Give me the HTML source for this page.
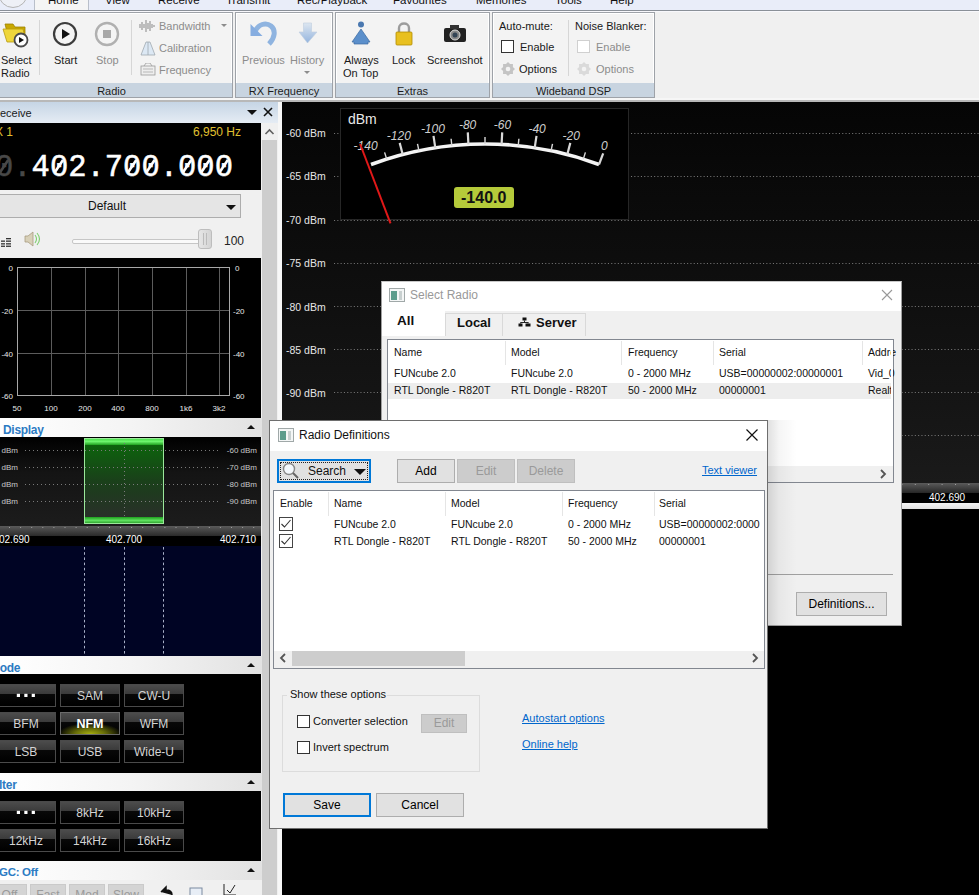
<!DOCTYPE html>
<html><head><meta charset="utf-8">
<style>
*{box-sizing:border-box}
html,body{margin:0;padding:0;overflow:hidden}
body{width:979px;height:895px;overflow:hidden;position:relative;background:#000;font-family:"Liberation Sans",sans-serif;font-size:12px;color:#000}
.a{position:absolute}
.t{position:absolute;white-space:nowrap;line-height:1}
/* ribbon */
#tabbar{left:0;top:0;width:979px;height:12px;background:#e9edf9;border-bottom:1px solid #a9b0bd}
#ribbon{left:0;top:12px;width:979px;height:88px;background:#f0f0f0}
.grp{position:absolute;top:1px;height:86px;border:1px solid #9ea2a8;background:#f3f3f3;box-shadow:inset 1px 1px 0 #fff,inset -1px 0 0 #fff}
.glab{position:absolute;left:0;right:0;bottom:0;height:14px;background:#c8d4e0;text-align:center;font-size:11px;line-height:17px;color:#1c1c1c;overflow:visible}
.rt{position:absolute;white-space:nowrap;line-height:1;font-size:11px;color:#1a1a1a;margin-top:1px}
.dis{color:#8c8c8c}
/* panel headers */
.ph{position:absolute;left:0;width:262px;height:18px;background:linear-gradient(90deg,#ffffff 0%,#f4f4f4 50%,#e2e2e2 100%);}
.ph .t{left:3px;top:6px;font-size:12px;font-weight:bold;color:#2c7bc3;letter-spacing:-0.3px}
.uparr{position:absolute;left:247px;top:7px;width:0;height:0;border-left:4px solid transparent;border-right:4px solid transparent;border-bottom:4px solid #111}
/* mode buttons */
.mb{position:absolute;width:60px;height:23px;border:1px solid #4a4a4a;background:linear-gradient(#4c4c4c 0%,#3a3a3a 44%,#080808 45%,#000 100%);color:#d4d4d4;font-size:12px;text-align:center;line-height:23px}
/* dialog */
.dlg{position:absolute;background:#f0f0f0;border:1px solid #8a8a8a}
.btn{position:absolute;background:#e1e1e1;border:1px solid #adadad;text-align:center;font-size:12px;color:#000}
.btn.dis{background:#cccccc;border-color:#bfbfbf;color:#9a9a9a}
.link{color:#0066cc;text-decoration:underline}
.cb{position:absolute;width:13px;height:13px;border:1px solid #333;background:#fff}
</style></head><body>

<!-- ============ RIBBON ============ -->
<div id="tabbar" class="a"></div>
<div class="a" style="left:0;top:0;width:35px;height:11px;border-right:1px solid #b9bfca;border-bottom:1px solid #b9bfca;background:#e9edf9"></div>
<div class="a" style="left:-2px;top:-22px;width:30px;height:30px;border-radius:50%;border:1px solid #b4b4b4;background:#eef0f6"></div>
<div class="a" style="left:35px;top:0;width:54px;height:12px;background:#f5f5f5"></div>
<div class="a" style="left:88px;top:0;width:891px;height:11px;border-left:1px solid #b9bfca;border-bottom:1px solid #b9bfca;background:#e9edf9"></div>
<div class="t" style="left:48px;top:-5px;font-size:11.5px;color:#111">Home</div>
<div class="t" style="left:105px;top:-5px;font-size:11.5px;color:#111">View</div>
<div class="t" style="left:158px;top:-5px;font-size:11.5px;color:#111">Receive</div>
<div class="t" style="left:226px;top:-5px;font-size:11.5px;color:#111">Transmit</div>
<div class="t" style="left:297px;top:-5px;font-size:11.5px;color:#111">Rec/Playback</div>
<div class="t" style="left:393px;top:-5px;font-size:11.5px;color:#111">Favourites</div>
<div class="t" style="left:476px;top:-5px;font-size:11.5px;color:#111">Memories</div>
<div class="t" style="left:555px;top:-5px;font-size:11.5px;color:#111">Tools</div>
<div class="t" style="left:610px;top:-5px;font-size:11.5px;color:#111">Help</div>
<div class="a" style="left:0;top:10px;width:979px;height:1px;background:#8a9098"></div><div class="a" style="left:0;top:11px;width:979px;height:1px;background:#f8f8fc"></div>
<div id="ribbon" class="a"></div>
<!-- groups -->
<div class="grp" style="left:-10px;top:12px;width:243px;height:86px">
  <div class="glab">Radio</div>
</div>
<div class="grp" style="left:235px;top:12px;width:98px;height:86px">
  <div class="glab">RX Frequency</div>
</div>
<div class="grp" style="left:335px;top:12px;width:155px;height:86px">
  <div class="glab">Extras</div>
</div>
<div class="grp" style="left:492px;top:12px;width:163px;height:86px">
  <div class="glab">Wideband DSP</div>
</div>
<!-- Radio group content -->
<div class="a" style="left:39px;top:20px;width:1px;height:55px;background:#d6d6d6"></div>
<div class="a" style="left:131px;top:20px;width:1px;height:55px;background:#d6d6d6"></div>
<svg class="a" style="left:1px;top:18px" width="30" height="30" viewBox="0 0 30 30">
 <path d="M4 6 L12 6 L14 9 L24 9 L24 20 L8 22 Z" fill="#c9a800" stroke="#9d8200" stroke-width="0.8"/>
 <path d="M2 11 L22 11 L25 24 L6 24 Z" fill="#efd63a" stroke="#b69a10" stroke-width="0.8"/>
 <circle cx="20" cy="22" r="6.5" fill="#fff" stroke="#4a4a4a" stroke-width="1.8"/>
 <path d="M18 19 L18 25 L23 22 Z" fill="#111"/>
</svg>
<div class="rt" style="left:1px;top:54px">Select</div>
<div class="rt" style="left:1px;top:67px">Radio</div>
<svg class="a" style="left:52px;top:21px" width="26" height="26" viewBox="0 0 26 26">
 <circle cx="13" cy="13" r="11" fill="#f4f4f4" stroke="#3c3c3c" stroke-width="2.2"/>
 <path d="M10 8 L10 18 L18 13 Z" fill="#111"/>
</svg>
<div class="rt" style="left:54px;top:54px">Start</div>
<svg class="a" style="left:94px;top:21px" width="26" height="26" viewBox="0 0 26 26">
 <circle cx="13" cy="13" r="11" fill="#f4f4f4" stroke="#b0b0b0" stroke-width="2.4"/>
 <rect x="9" y="9" width="8" height="8" fill="#a8a8a8"/>
</svg>
<div class="rt dis" style="left:96px;top:54px">Stop</div>
<svg class="a" style="left:139px;top:19px" width="17" height="14" viewBox="0 0 17 14">
 <g stroke="#9a9a9a" stroke-width="1.2">
 <path d="M1 5v4M3 3v8M5 5v4M7 1v12M9 4v6M11 2v10M13 5v4M15 6v2"/>
 </g>
</svg>
<div class="rt dis" style="left:159px;top:20px">Bandwidth</div>
<div class="a" style="left:221px;top:24px;width:0;height:0;border-left:3px solid transparent;border-right:3px solid transparent;border-top:3px solid #8c8c8c"></div>
<svg class="a" style="left:140px;top:41px" width="16" height="15" viewBox="0 0 16 15">
 <path d="M6 1 L10 1 L15 14 L1 14 Z" fill="#dce8f4" stroke="#a0a8b0" stroke-width="0.8"/>
 <path d="M8 1 L8 14" stroke="#a0a8b0" stroke-width="0.8"/>
</svg>
<div class="rt dis" style="left:159px;top:42px">Calibration</div>
<svg class="a" style="left:140px;top:63px" width="16" height="13" viewBox="0 0 16 13">
 <rect x="1" y="3" width="14" height="9" fill="#eee" stroke="#9a9a9a" stroke-width="0.8"/>
 <path d="M3 6h10M3 9h10" stroke="#aaa" stroke-width="0.8"/>
 <path d="M4 3 L6 0 L10 0 L12 3" fill="none" stroke="#9a9a9a" stroke-width="0.8"/>
</svg>
<div class="rt dis" style="left:159px;top:64px">Frequency</div>
<!-- RX Frequency -->
<svg class="a" style="left:248px;top:20px" width="30" height="28" viewBox="0 0 30 28">
 <path d="M7 12 C10 4, 18 2, 23 6 C28 10, 27 18, 21 24" fill="none" stroke="#8fb4e0" stroke-width="5"/>
 <path d="M2.5 4 L2.5 16 L14.5 16 Z" fill="#86ade0"/>
</svg>
<div class="rt dis" style="left:242px;top:54px">Previous</div>
<svg class="a" style="left:298px;top:22px" width="20" height="22" viewBox="0 0 20 22">
 <defs><linearGradient id="hg" x1="0" y1="0" x2="0" y2="1"><stop offset="0" stop-color="#dde6f0"/><stop offset="1" stop-color="#94b4de"/></linearGradient></defs>
 <path d="M5.5 1 L13.5 1 L13.5 10 L19 10 L9.5 21 L1 10 L5.5 10 Z" fill="url(#hg)" stroke="#c0cedf" stroke-width="0.6"/>
</svg>
<div class="rt dis" style="left:290px;top:54px">History</div>
<div class="a" style="left:304px;top:71px;width:0;height:0;border-left:3px solid transparent;border-right:3px solid transparent;border-top:3px solid #8c8c8c"></div>
<!-- Extras -->
<svg class="a" style="left:348px;top:21px" width="26" height="26" viewBox="0 0 26 26">
 <circle cx="13" cy="3.5" r="3" fill="#4a78b0"/>
 <path d="M13 8 L22 21 L20 21 L20 23 L6 23 L6 21 L4 21 Z" fill="#5b8fcb" stroke="#3c6aa0" stroke-width="0.7"/>
</svg>
<div class="rt" style="left:344px;top:54px">Always</div>
<div class="rt" style="left:343px;top:67px">On Top</div>
<svg class="a" style="left:394px;top:21px" width="20" height="26" viewBox="0 0 20 26">
 <path d="M5 11 L5 7 C5 1, 15 1, 15 7 L15 11" fill="none" stroke="#9c9c9c" stroke-width="2.4"/>
 <rect x="2" y="11" width="16" height="13" rx="1" fill="#e8c020" stroke="#b08c00" stroke-width="0.8"/>
</svg>
<div class="rt" style="left:392px;top:54px">Lock</div>
<svg class="a" style="left:443px;top:24px" width="24" height="19" viewBox="0 0 24 19">
 <rect x="1" y="4" width="22" height="14" rx="2" fill="#222"/>
 <rect x="7" y="1" width="9" height="4" fill="#333"/>
 <circle cx="12" cy="11" r="5" fill="#888" stroke="#ddd" stroke-width="1"/>
 <circle cx="12" cy="11" r="2.5" fill="#345"/>
</svg>
<div class="rt" style="left:427px;top:54px">Screenshot</div>
<!-- Wideband DSP -->
<div class="a" style="left:568px;top:20px;width:1px;height:56px;background:#d6d6d6"></div>
<div class="rt" style="left:499px;top:20px">Auto-mute:</div>
<div class="rt" style="left:575px;top:20px">Noise Blanker:</div>
<div class="a" style="left:501px;top:40px;width:13px;height:13px;border:1px solid #333;background:#fff"></div>
<div class="rt" style="left:520px;top:41px">Enable</div>
<div class="a" style="left:577px;top:40px;width:13px;height:13px;border:1px solid #d0d0d0;background:#fff"></div>
<div class="rt dis" style="left:596px;top:41px">Enable</div>
<svg class="a" style="left:500px;top:61px" width="16" height="16" viewBox="0 0 16 16"><polygon points="15.00,8.00 12.90,10.03 12.95,12.95 10.03,12.90 8.00,15.00 5.97,12.90 3.05,12.95 3.10,10.03 1.00,8.00 3.10,5.97 3.05,3.05 5.97,3.10 8.00,1.00 10.03,3.10 12.95,3.05 12.90,5.97" fill="#c4c4c4"/><circle cx="8" cy="8" r="2.3" fill="#f3f3f3"/></svg>
<div class="rt" style="left:519px;top:63px">Options</div>
<svg class="a" style="left:576px;top:61px" width="16" height="16" viewBox="0 0 16 16"><polygon points="15.00,8.00 12.90,10.03 12.95,12.95 10.03,12.90 8.00,15.00 5.97,12.90 3.05,12.95 3.10,10.03 1.00,8.00 3.10,5.97 3.05,3.05 5.97,3.10 8.00,1.00 10.03,3.10 12.95,3.05 12.90,5.97" fill="#dadada"/><circle cx="8" cy="8" r="2.3" fill="#f3f3f3"/></svg>
<div class="rt dis" style="left:596px;top:63px">Options</div>

<!-- ============ LEFT PANEL ============ -->
<div class="a" style="left:0;top:98px;width:979px;height:4px;background:#f6f6f6"></div>
<div class="a" style="left:0;top:100px;width:979px;height:2px;background:#b8b8b8"></div>
<!-- Receive header -->
<div class="a" style="left:0;top:102px;width:278px;height:21px;background:linear-gradient(#c6d5e5,#e5ecf4)"></div>
<div class="t" style="left:-8px;top:108px;font-size:11px;color:#1a1a1a">Receive</div>
<div class="a" style="left:247px;top:110px;width:0;height:0;border-left:5px solid transparent;border-right:5px solid transparent;border-top:5px solid #111"></div>
<svg class="a" style="left:263px;top:107px" width="10" height="10" viewBox="0 0 10 10"><path d="M1 1L9 9M9 1L1 9" stroke="#111" stroke-width="1.6"/></svg>
<!-- scrollbar -->
<div class="a" style="left:261px;top:123px;width:17px;height:772px;background:#f0f0f0"></div>
<div class="a" style="left:262px;top:140px;width:15px;height:755px;background:#cdcdcd"></div>
<svg class="a" style="left:264px;top:128px" width="11" height="8" viewBox="0 0 11 8"><path d="M1.5 6L5.5 2L9.5 6" fill="none" stroke="#606060" stroke-width="1.6"/></svg>
<div class="a" style="left:278px;top:102px;width:4px;height:793px;background:#f7f7f7"></div>
<!-- freq display -->
<div class="a" style="left:0;top:123px;width:261px;height:67px;background:#000"></div>
<div class="t" style="left:-5px;top:126px;font-size:12px;color:#e0c030">X 1</div>
<div class="t" style="left:193px;top:126px;font-size:12px;color:#e0c030">6,950 Hz</div>
<div class="t" style="left:-5px;top:153px;font-family:'Liberation Mono',monospace;font-size:30.5px;color:#fff;-webkit-text-stroke:0.5px #fff"><span style="color:#484848;-webkit-text-stroke:0.5px #484848">0.</span>402.700.000</div>
<svg class="a" style="left:0;top:0" width="261" height="190" viewBox="0 0 261 190"><path d="M8.2 160 L0.2 172" stroke="#484848" stroke-width="2.6"/><path d="M63.0 160 L55.0 172" stroke="#fff" stroke-width="2.6"/><path d="M136.3 160 L128.3 172" stroke="#fff" stroke-width="2.6"/><path d="M154.6 160 L146.6 172" stroke="#fff" stroke-width="2.6"/><path d="M191.2 160 L183.2 172" stroke="#fff" stroke-width="2.6"/><path d="M209.5 160 L201.5 172" stroke="#fff" stroke-width="2.6"/><path d="M227.8 160 L219.8 172" stroke="#fff" stroke-width="2.6"/></svg>
<!-- dropdown & volume -->
<div class="a" style="left:0;top:190px;width:261px;height:68px;background:#f0f0f0"></div>
<div class="a" style="left:-2px;top:194px;width:243px;height:24px;background:#e5e5e5;border:1px solid #adadad"></div>
<div class="t" style="left:88px;top:200px;font-size:12px;color:#111">Default</div>
<div class="a" style="left:226px;top:205px;width:0;height:0;border-left:5px solid transparent;border-right:5px solid transparent;border-top:5px solid #111"></div>
<svg class="a" style="left:0;top:237px" width="12" height="11" viewBox="0 0 12 11"><g fill="#333"><rect x="1" y="3.5" width="4" height="1.3"/><rect x="1" y="6.2" width="4" height="1.3"/><rect x="1" y="8.6" width="4" height="1.3"/><rect x="6" y="1" width="5" height="1.3"/><rect x="6" y="3.5" width="5" height="1.3"/><rect x="6" y="6.2" width="5" height="1.3"/><rect x="6" y="8.6" width="5" height="1.3"/></g></svg>
<svg class="a" style="left:24px;top:231px" width="18" height="16" viewBox="0 0 18 16"><path d="M1 5h3l5-4v14l-5-4H1z" fill="#d8d0b8" stroke="#a89c80" stroke-width="0.8"/><path d="M11 4q3 4 0 8M13 2q5 6 0 12" fill="none" stroke="#7fcf6f" stroke-width="1.1"/></svg>
<div class="a" style="left:72px;top:239px;width:130px;height:5px;background:#fafafa;border:1px solid #c6c6c6;border-radius:2px"></div>
<div class="a" style="left:198px;top:229px;width:14px;height:20px;background:linear-gradient(90deg,#e6e6e6,#d4d4d4);border:1px solid #bdbdbd;border-radius:3px"></div>
<div class="a" style="left:203px;top:233px;width:1px;height:12px;background:#bbb"></div>
<div class="a" style="left:206px;top:233px;width:1px;height:12px;background:#bbb"></div>
<div class="t" style="left:224px;top:235px;font-size:12px;color:#222">100</div>
<!-- audio spectrum -->
<div class="a" style="left:0;top:258px;width:261px;height:160px;background:#000"></div>
<svg class="a" style="left:0;top:258px" width="261" height="160" viewBox="0 0 261 160">
 <g stroke="#5c5c5c" stroke-width="1">
  <path d="M51.5 9v128M85.5 9v128M118.5 9v128M152.5 9v128M186.5 9v128M219.5 9v128"/>
  <path d="M17 52.5h213M17 95.5h213"/>
 </g>
 <rect x="17.5" y="9.5" width="212" height="128" fill="none" stroke="#a8a8a8" stroke-width="1"/>
 <g fill="#e8e8e8" font-family="Liberation Sans" font-size="8">
  <g text-anchor="end"><text x="13" y="13">0</text><text x="13" y="56">-20</text><text x="13" y="99">-40</text><text x="13" y="141">-60</text></g>
  <text x="235" y="13">0</text><text x="233" y="56">-20</text><text x="233" y="99">-40</text><text x="233" y="141">-60</text>
  <g text-anchor="middle"><text x="17" y="152.5">50</text><text x="51" y="152.5">100</text><text x="85" y="152.5">200</text><text x="118" y="152.5">400</text><text x="152" y="152.5">800</text><text x="186" y="152.5">1k6</text><text x="219" y="152.5">3k2</text></g>
 </g>
</svg>
<!-- Display header -->
<div class="ph" style="top:418px;height:19px"><div class="t">Display</div><div class="uparr"></div></div>
<!-- display spectrum -->
<div class="a" style="left:0;top:437px;width:261px;height:89px;background:linear-gradient(#000 0%,#141414 40%,#1c1c1c 100%)"></div>
<svg class="a" style="left:0;top:437px" width="261" height="89" viewBox="0 0 261 89">
 <defs>
  <linearGradient id="gfill" x1="0" y1="0" x2="0" y2="1"><stop offset="0" stop-color="#0a6a0a"/><stop offset="0.5" stop-color="#1a401a"/><stop offset="1" stop-color="#2c2c2c"/></linearGradient>
  <linearGradient id="gband" x1="0" y1="0" x2="0" y2="1"><stop offset="0" stop-color="#3fd83f"/><stop offset="0.5" stop-color="#6df56d"/><stop offset="1" stop-color="#1fa01f"/></linearGradient>
  <linearGradient id="gband2" x1="0" y1="0" x2="0" y2="1"><stop offset="0" stop-color="#1ea01e"/><stop offset="0.5" stop-color="#5fdf5f"/><stop offset="1" stop-color="#1e901e"/></linearGradient>
 </defs>
 <rect x="84" y="1" width="80" height="86" fill="url(#gfill)"/>
 <rect x="84" y="1" width="80" height="7" fill="url(#gband)"/>
 <rect x="84" y="80" width="80" height="7" fill="url(#gband2)"/>
 <rect x="84.5" y="1.5" width="79" height="85" fill="none" stroke="#9be89b" stroke-width="1"/>
 <g stroke="#7a7a7a" stroke-width="1" stroke-dasharray="1 3">
  <path d="M25 13.5h195M25 30.5h195M25 47.5h195M25 64.5h195"/>
  <path d="M124.5 6v74"/>
 </g>
 <g fill="#c8c8c8" font-family="Liberation Sans" font-size="8" text-anchor="end">
  <text x="18" y="16">0 dBm</text><text x="18" y="33">0 dBm</text><text x="18" y="50">0 dBm</text><text x="18" y="67">0 dBm</text>
  <text x="257" y="16">-60 dBm</text><text x="257" y="33">-70 dBm</text><text x="257" y="50">-80 dBm</text><text x="257" y="67">-90 dBm</text>
 </g>
</svg>
<div class="a" style="left:0;top:526px;width:261px;height:10px;background:linear-gradient(#5a5a5a,#2a2a2a)"></div>
<svg class="a" style="left:0;top:526px" width="261" height="4" viewBox="0 0 261 4"><g stroke="#a0a0a0" stroke-width="1" stroke-dasharray="1 10.1"><path d="M9 1.5h250"/></g></svg>
<div class="a" style="left:0;top:536px;width:261px;height:10px;background:#000"></div>
<div class="t" style="left:-1px;top:535px;font-size:10px;color:#fff">02.690</div>
<div class="t" style="left:106px;top:535px;font-size:10px;color:#fff">402.700</div>
<div class="t" style="left:220px;top:535px;font-size:10px;color:#fff">402.710</div>
<!-- waterfall -->
<div class="a" style="left:0;top:546px;width:261px;height:110px;background:#000424"></div>
<svg class="a" style="left:0;top:546px" width="261" height="110" viewBox="0 0 261 110"><g stroke="#a8b0c8" stroke-width="1" stroke-dasharray="2.6 2.6"><path d="M84.5 1v110M124.5 1v110M163.5 1v110"/></g></svg>
<!-- Mode -->
<div class="ph" style="top:656px;height:18px"><div class="t" style="left:-10px">Mode</div><div class="uparr"></div></div>
<div class="a" style="left:0;top:674px;width:261px;height:99px;background:#000"></div>
<div class="mb" style="left:-4px;top:684px"></div><svg class="a" style="left:0;top:684px" width="56" height="23" viewBox="0 0 56 23"><g fill="#fff"><rect x="16.8" y="9.8" width="3.2" height="3.2"/><rect x="24.3" y="9.8" width="3.2" height="3.2"/><rect x="31.7" y="9.8" width="3.2" height="3.2"/></g></svg>
<div class="mb" style="left:60px;top:684px">SAM</div>
<div class="mb" style="left:124px;top:684px">CW-U</div>
<div class="mb" style="left:-4px;top:712px">BFM</div>
<div class="mb" style="left:60px;top:712px;border-color:#6a6a6a;color:#fff;font-weight:bold;font-size:12.5px;background:radial-gradient(ellipse 32px 11px at 50% 100%,#a8b010 0%,#6a7008 45%,rgba(0,0,0,0) 100%),linear-gradient(#4c4c4c 0%,#3a3a3a 44%,#080808 45%,#000 100%)">NFM</div>
<div class="mb" style="left:124px;top:712px">WFM</div>
<div class="mb" style="left:-4px;top:740px">LSB</div>
<div class="mb" style="left:60px;top:740px">USB</div>
<div class="mb" style="left:124px;top:740px">Wide-U</div>
<!-- Filter -->
<div class="ph" style="top:773px;height:18px"><div class="t" style="left:-11px">Filter</div><div class="uparr"></div></div>
<div class="a" style="left:0;top:791px;width:261px;height:70px;background:#000"></div>
<div class="mb" style="left:-4px;top:801px"></div><svg class="a" style="left:0;top:801px" width="56" height="23" viewBox="0 0 56 23"><g fill="#fff"><rect x="16.8" y="9.8" width="3.2" height="3.2"/><rect x="24.3" y="9.8" width="3.2" height="3.2"/><rect x="31.7" y="9.8" width="3.2" height="3.2"/></g></svg>
<div class="mb" style="left:60px;top:801px">8kHz</div>
<div class="mb" style="left:124px;top:801px">10kHz</div>
<div class="mb" style="left:-4px;top:829px">12kHz</div>
<div class="mb" style="left:60px;top:829px">14kHz</div>
<div class="mb" style="left:124px;top:829px">16kHz</div>
<!-- AGC -->
<div class="ph" style="top:861px;height:19px"><div class="t" style="left:-9px;font-size:11.5px">AGC: Off</div><div class="uparr"></div></div>
<div class="a" style="left:0;top:880px;width:261px;height:15px;background:#f0f0f0"></div>
<div class="btn" style="left:-8px;top:884px;width:35px;height:20px;background:#d4d4d4;border-color:#cacaca;color:#9a9a9a;padding-top:3px;text-align:center">Off</div>
<div class="btn" style="left:30px;top:884px;width:36px;height:20px;background:#d4d4d4;border-color:#cacaca;color:#9a9a9a;padding-top:3px">Fast</div>
<div class="btn" style="left:69px;top:884px;width:36px;height:20px;background:#d4d4d4;border-color:#cacaca;color:#9a9a9a;padding-top:3px">Mod</div>
<div class="btn" style="left:108px;top:884px;width:36px;height:20px;background:#d4d4d4;border-color:#cacaca;color:#9a9a9a;padding-top:3px">Slow</div>
<svg class="a" style="left:158px;top:884px" width="80" height="11" viewBox="0 0 80 11"><path d="M3 8 L8 3 L8 6 Q14 6 14 11" fill="#111" stroke="#111" stroke-width="1.5"/><rect x="32" y="4" width="12" height="8" fill="#e8eef6" stroke="#7a8aa0"/><path d="M66 0 V11 M66 11 H78 M69 6 L72 9 L77 1" fill="none" stroke="#222" stroke-width="1"/></svg>

<!-- ============ SPECTRUM ============ -->
<div class="a" style="left:282px;top:102px;width:697px;height:381px;background:linear-gradient(#050505 0%,#0b0b0b 30%,#151515 80%,#1a1a1a 100%)"></div>
<svg class="a" style="left:282px;top:102px" width="697" height="381" viewBox="0 0 697 381">
 <g stroke="#747474" stroke-width="1" stroke-dasharray="1.1 2.2">
  <path d="M52 31.5h645M52 74.5h645M52 118.5h645M52 161.5h645M52 204.5h645M52 247.5h645M52 290.5h645M52 333.5h645"/>
 </g>
 <g fill="#e6e6e6" font-family="Liberation Sans" font-size="10.5">
  <text x="4" y="34.5">-60 dBm</text><text x="4" y="77.5">-65 dBm</text><text x="4" y="121.5">-70 dBm</text><text x="4" y="164.5">-75 dBm</text><text x="4" y="208.5">-80 dBm</text><text x="4" y="251.5">-85 dBm</text><text x="4" y="294.5">-90 dBm</text>
 </g>
</svg>
<!-- meter -->
<div class="a" style="left:340px;top:108px;width:289px;height:112px;background:#000;border:1px solid #262626"></div>
<svg class="a" style="left:282px;top:102px" width="400" height="130" viewBox="282 102 400 130">
 <g id="meter"><path d="M371.0 164.5 A327 327 0 0 1 599.0 164.5" fill="none" stroke="#f4f4f4" stroke-width="3.6" stroke-linecap="butt"/>
<text x="365.6" y="150.0" text-anchor="middle" font-family="Liberation Sans" font-style="italic" font-size="12" fill="#cfcfcf">-140</text>
<path d="M386.7 159.1 L384.6 152.4" stroke="#d8d8d8" stroke-width="1.4"/>
<path d="M402.7 154.5 L399.7 142.9" stroke="#d8d8d8" stroke-width="2.2"/>
<text x="398.8" y="139.5" text-anchor="middle" font-family="Liberation Sans" font-style="italic" font-size="12" fill="#cfcfcf">-120</text>
<path d="M418.9 150.7 L417.5 143.9" stroke="#d8d8d8" stroke-width="1.4"/>
<path d="M435.3 147.8 L433.5 135.9" stroke="#d8d8d8" stroke-width="2.2"/>
<text x="432.9" y="132.5" text-anchor="middle" font-family="Liberation Sans" font-style="italic" font-size="12" fill="#cfcfcf">-100</text>
<path d="M451.8 145.7 L451.1 138.7" stroke="#d8d8d8" stroke-width="1.4"/>
<path d="M468.4 144.4 L467.8 132.4" stroke="#d8d8d8" stroke-width="2.2"/>
<text x="467.6" y="128.9" text-anchor="middle" font-family="Liberation Sans" font-style="italic" font-size="12" fill="#cfcfcf">-80</text>
<path d="M485.0 144.0 L485.0 137.0" stroke="#d8d8d8" stroke-width="1.4"/>
<path d="M501.6 144.4 L502.2 132.4" stroke="#d8d8d8" stroke-width="2.2"/>
<text x="502.4" y="128.9" text-anchor="middle" font-family="Liberation Sans" font-style="italic" font-size="12" fill="#cfcfcf">-60</text>
<path d="M518.2 145.7 L518.9 138.7" stroke="#d8d8d8" stroke-width="1.4"/>
<path d="M534.7 147.8 L536.5 135.9" stroke="#d8d8d8" stroke-width="2.2"/>
<text x="537.1" y="132.5" text-anchor="middle" font-family="Liberation Sans" font-style="italic" font-size="12" fill="#cfcfcf">-40</text>
<path d="M551.1 150.7 L552.5 143.9" stroke="#d8d8d8" stroke-width="1.4"/>
<path d="M567.3 154.5 L570.3 142.9" stroke="#d8d8d8" stroke-width="2.2"/>
<text x="571.2" y="139.5" text-anchor="middle" font-family="Liberation Sans" font-style="italic" font-size="12" fill="#cfcfcf">-20</text>
<path d="M583.3 159.1 L585.4 152.4" stroke="#d8d8d8" stroke-width="1.4"/>
<path d="M599.0 164.5 L603.2 153.3" stroke="#d8d8d8" stroke-width="2.2"/>
<text x="604.4" y="150.0" text-anchor="middle" font-family="Liberation Sans" font-style="italic" font-size="12" fill="#cfcfcf">0</text>
<path d="M360.1 144.0 L390.5 223.4" stroke="#e01818" stroke-width="2"/></g>
</svg>
<div class="t" style="left:348px;top:112px;font-size:14px;color:#e8e8e8">dBm</div>
<div class="a" style="left:454px;top:187px;width:60px;height:21px;background:#b5ca3a;border-radius:3px"></div>
<div class="t" style="left:461px;top:190px;font-size:16px;font-weight:bold;color:#111">-140.0</div>
<!-- bottom scale bar -->
<div class="a" style="left:282px;top:483px;width:697px;height:10px;background:linear-gradient(#5a5a5a,#262626)"></div>
<svg class="a" style="left:282px;top:483px" width="697" height="4" viewBox="0 0 697 4"><g stroke="#a0a0a0" stroke-width="1" stroke-dasharray="1 12.4"><path d="M3 1.5h694"/></g></svg>
<div class="a" style="left:282px;top:493px;width:697px;height:10px;background:#000"></div>
<div class="t" style="left:929px;top:493px;font-size:10px;color:#fff">402.690</div>
<div class="a" style="left:282px;top:503px;width:697px;height:6px;background:linear-gradient(#f4f4f4,#e0e0e0)"></div>
<div class="a" style="left:282px;top:509px;width:697px;height:386px;background:#000"></div>

<!-- ============ SELECT RADIO ============ -->
<div class="a" style="left:381px;top:281px;width:521px;height:345px;background:#f0f0f0;border:1px solid #a0a0a0;border-top-color:#c8c8c8"></div>
<div class="a" style="left:382px;top:282px;width:519px;height:29px;background:#fff"></div>
<svg class="a" style="left:389px;top:288px" width="16" height="14" viewBox="0 0 16 14"><rect x="0.5" y="0.5" width="15" height="13" fill="#f4f6f6" stroke="#a0a8a8"/><rect x="2" y="3" width="6" height="9" fill="#5c9c8c"/><rect x="10" y="3" width="3" height="9" fill="#c8d0d0"/></svg>
<div class="t" style="left:410px;top:289px;font-size:12px;color:#999">Select Radio</div>
<svg class="a" style="left:881px;top:289px" width="12" height="12" viewBox="0 0 12 12"><path d="M1 1L11 11M11 1L1 11" stroke="#999" stroke-width="1.1"/></svg>
<!-- tabs -->
<div class="a" style="left:445px;top:313px;width:58px;height:23px;background:#f0f0f0;border:1px solid #d9d9d9;border-bottom:0"></div>
<div class="a" style="left:502px;top:313px;width:84px;height:23px;background:#f0f0f0;border:1px solid #d9d9d9;border-bottom:0"></div>
<div class="a" style="left:382px;top:311px;width:63px;height:25px;background:#fff"></div>
<div class="t" style="left:397px;top:314px;font-size:13.5px;font-weight:bold;color:#111">All</div>
<div class="t" style="left:457px;top:316px;font-size:13px;font-weight:bold;color:#111">Local</div>
<svg class="a" style="left:518px;top:317px" width="13" height="10" viewBox="0 0 13 10"><g fill="#111"><rect x="4.5" y="0.5" width="4" height="3"/><rect x="0.5" y="6.5" width="4" height="3"/><rect x="7.5" y="6.5" width="5" height="3"/></g><path d="M6.5 3.5v2.5M2.5 5.5h8M2.5 5.5v1M10 5.5v1" stroke="#222" stroke-width="1"/></svg>
<div class="t" style="left:536px;top:316px;font-size:13px;font-weight:bold;color:#111">Server</div>
<!-- list -->
<div class="a" style="left:387px;top:339px;width:507px;height:144px;background:#fff;border:1px solid #828790"></div>
<div class="a" style="left:505px;top:341px;width:1px;height:24px;background:#e5e5e5"></div>
<div class="a" style="left:621px;top:341px;width:1px;height:24px;background:#e5e5e5"></div>
<div class="a" style="left:713px;top:341px;width:1px;height:24px;background:#e5e5e5"></div>
<div class="a" style="left:862px;top:341px;width:1px;height:24px;background:#e5e5e5"></div>
<div class="t" style="left:394px;top:347px;font-size:10.5px;color:#111">Name</div>
<div class="t" style="left:511px;top:347px;font-size:10.5px;color:#111">Model</div>
<div class="t" style="left:628px;top:347px;font-size:10.5px;color:#111">Frequency</div>
<div class="t" style="left:719px;top:347px;font-size:10.5px;color:#111">Serial</div>
<div class="t" style="left:868px;top:347px;font-size:10.5px;color:#111">Addre</div>
<div class="a" style="left:388px;top:383px;width:505px;height:16px;background:#ededed"></div>
<div class="t" style="left:394px;top:368px;font-size:10.5px;color:#111">FUNcube 2.0</div>
<div class="t" style="left:511px;top:368px;font-size:10.5px;color:#111">FUNcube 2.0</div>
<div class="t" style="left:628px;top:368px;font-size:10.5px;color:#111">0 - 2000 MHz</div>
<div class="t" style="left:719px;top:368px;font-size:10.5px;color:#111">USB=00000002:00000001</div>
<div class="t" style="left:868px;top:368px;font-size:10.5px;color:#111">Vid_0</div>
<div class="t" style="left:394px;top:385px;font-size:10.5px;color:#111">RTL Dongle - R820T</div>
<div class="t" style="left:511px;top:385px;font-size:10.5px;color:#111">RTL Dongle - R820T</div>
<div class="t" style="left:628px;top:385px;font-size:10.5px;color:#111">50 - 2000 MHz</div>
<div class="t" style="left:719px;top:385px;font-size:10.5px;color:#111">00000001</div>
<div class="t" style="left:868px;top:385px;font-size:10.5px;color:#111">Realt</div>
<div class="a" style="left:891px;top:340px;width:2px;height:142px;background:#fff"></div>
<div class="a" style="left:388px;top:466px;width:505px;height:16px;background:#f0f0f0"></div>
<svg class="a" style="left:879px;top:469px" width="8" height="10" viewBox="0 0 8 10"><path d="M2 1L6 5L2 9" fill="none" stroke="#555" stroke-width="1.8"/></svg>
<div class="a" style="left:767px;top:574px;width:126px;height:1px;background:#a0a0a0"></div>
<div class="btn" style="left:796px;top:592px;width:91px;height:24px;line-height:22px">Definitions...</div>

<!-- ============ RADIO DEFINITIONS ============ -->
<div class="a" style="left:767px;top:420px;width:30px;height:206px;background:linear-gradient(90deg,rgba(0,0,0,0.13),rgba(0,0,0,0.04) 40%,rgba(0,0,0,0))"></div>
<div class="a" style="left:269px;top:420px;width:499px;height:409px;background:#f0f0f0;border:1px solid #6e6e6e"></div>
<div class="a" style="left:270px;top:421px;width:497px;height:30px;background:#fff"></div>
<svg class="a" style="left:278px;top:428px" width="16" height="14" viewBox="0 0 16 14"><rect x="0.5" y="0.5" width="15" height="13" fill="#f4f6f6" stroke="#a0a8a8"/><rect x="2" y="3" width="6" height="9" fill="#5c9c8c"/><rect x="10" y="3" width="3" height="9" fill="#c8d0d0"/></svg>
<div class="t" style="left:299px;top:429px;font-size:12px;color:#111">Radio Definitions</div>
<svg class="a" style="left:746px;top:429px" width="12" height="12" viewBox="0 0 12 12"><path d="M0.5 0.5L11.5 11.5M11.5 0.5L0.5 11.5" stroke="#111" stroke-width="1.2"/></svg>
<!-- toolbar -->
<div class="a" style="left:277px;top:459px;width:94px;height:24px;background:#e1e1e1;border:2px solid #0078d7"></div>
<div class="a" style="left:280px;top:462px;width:88px;height:18px;border:1px dotted #222"></div>
<svg class="a" style="left:282px;top:462px" width="18" height="18" viewBox="0 0 18 18"><circle cx="7" cy="7" r="5.5" fill="#f4f8fc" stroke="#888" stroke-width="1.4"/><path d="M11 11L16 16" stroke="#666" stroke-width="2"/></svg>
<div class="t" style="left:308px;top:465px;font-size:12px;color:#111">Search</div>
<div class="a" style="left:354px;top:469px;width:0;height:0;border-left:6px solid transparent;border-right:6px solid transparent;border-top:6px solid #111"></div>
<div class="btn" style="left:397px;top:459px;width:58px;height:24px;line-height:22px">Add</div>
<div class="btn dis" style="left:457px;top:459px;width:58px;height:24px;line-height:22px">Edit</div>
<div class="btn dis" style="left:517px;top:459px;width:58px;height:24px;line-height:22px">Delete</div>
<div class="t link" style="left:702px;top:465px;font-size:11px">Text viewer</div>
<!-- list -->
<div class="a" style="left:273px;top:490px;width:492px;height:179px;background:#fff;border:1px solid #828790"></div>
<div class="a" style="left:328px;top:492px;width:1px;height:24px;background:#e5e5e5"></div>
<div class="a" style="left:445px;top:492px;width:1px;height:24px;background:#e5e5e5"></div>
<div class="a" style="left:562px;top:492px;width:1px;height:24px;background:#e5e5e5"></div>
<div class="a" style="left:654px;top:492px;width:1px;height:24px;background:#e5e5e5"></div>
<div class="t" style="left:280px;top:498px;font-size:10.5px;color:#111">Enable</div>
<div class="t" style="left:334px;top:498px;font-size:10.5px;color:#111">Name</div>
<div class="t" style="left:451px;top:498px;font-size:10.5px;color:#111">Model</div>
<div class="t" style="left:568px;top:498px;font-size:10.5px;color:#111">Frequency</div>
<div class="t" style="left:659px;top:498px;font-size:10.5px;color:#111">Serial</div>
<svg class="a" style="left:279px;top:517px" width="14" height="31" viewBox="0 0 14 31"><rect x="0.5" y="0.5" width="13" height="13" fill="#fff" stroke="#444"/><path d="M2.5 7L5.5 10L11.5 3" fill="none" stroke="#333" stroke-width="1.1"/><rect x="0.5" y="17.5" width="13" height="13" fill="#fff" stroke="#444"/><path d="M2.5 24L5.5 27L11.5 20" fill="none" stroke="#333" stroke-width="1.1"/></svg>
<div class="t" style="left:334px;top:519px;font-size:10.5px;color:#111">FUNcube 2.0</div>
<div class="t" style="left:451px;top:519px;font-size:10.5px;color:#111">FUNcube 2.0</div>
<div class="t" style="left:568px;top:519px;font-size:10.5px;color:#111">0 - 2000 MHz</div>
<div class="t" style="left:659px;top:519px;font-size:10.5px;color:#111">USB=00000002:0000</div>
<div class="t" style="left:334px;top:536px;font-size:10.5px;color:#111">RTL Dongle - R820T</div>
<div class="t" style="left:451px;top:536px;font-size:10.5px;color:#111">RTL Dongle - R820T</div>
<div class="t" style="left:568px;top:536px;font-size:10.5px;color:#111">50 - 2000 MHz</div>
<div class="t" style="left:659px;top:536px;font-size:10.5px;color:#111">00000001</div>
<div class="a" style="left:763px;top:491px;width:1px;height:177px;background:#fff"></div>
<div class="a" style="left:274px;top:651px;width:490px;height:17px;background:#f0f0f0"></div>
<div class="a" style="left:292px;top:651px;width:173px;height:15px;background:#cdcdcd"></div>
<svg class="a" style="left:279px;top:653px" width="8" height="10" viewBox="0 0 8 10"><path d="M6 1L2 5L6 9" fill="none" stroke="#555" stroke-width="1.8"/></svg>
<svg class="a" style="left:751px;top:653px" width="8" height="10" viewBox="0 0 8 10"><path d="M2 1L6 5L2 9" fill="none" stroke="#555" stroke-width="1.8"/></svg>
<!-- group box -->
<div class="a" style="left:282px;top:695px;width:198px;height:77px;border:1px solid #dcdcdc"></div>
<div class="a" style="left:287px;top:689px;width:100px;height:12px;background:#f0f0f0"></div>
<div class="t" style="left:290px;top:689px;font-size:11px;color:#111">Show these options</div>
<div class="cb" style="left:297px;top:715px"></div>
<div class="t" style="left:313px;top:716px;font-size:11px;color:#111">Converter selection</div>
<div class="btn dis" style="left:421px;top:714px;width:46px;height:19px;line-height:17px">Edit</div>
<div class="cb" style="left:297px;top:741px"></div>
<div class="t" style="left:313px;top:742px;font-size:11px;color:#111">Invert spectrum</div>
<div class="t link" style="left:522px;top:713px;font-size:11px">Autostart options</div>
<div class="t link" style="left:522px;top:739px;font-size:11px">Online help</div>
<div class="btn" style="left:283px;top:793px;width:88px;height:24px;line-height:20px;border:2px solid #0078d7">Save</div>
<div class="btn" style="left:376px;top:793px;width:88px;height:24px;line-height:22px">Cancel</div>

</body></html>
